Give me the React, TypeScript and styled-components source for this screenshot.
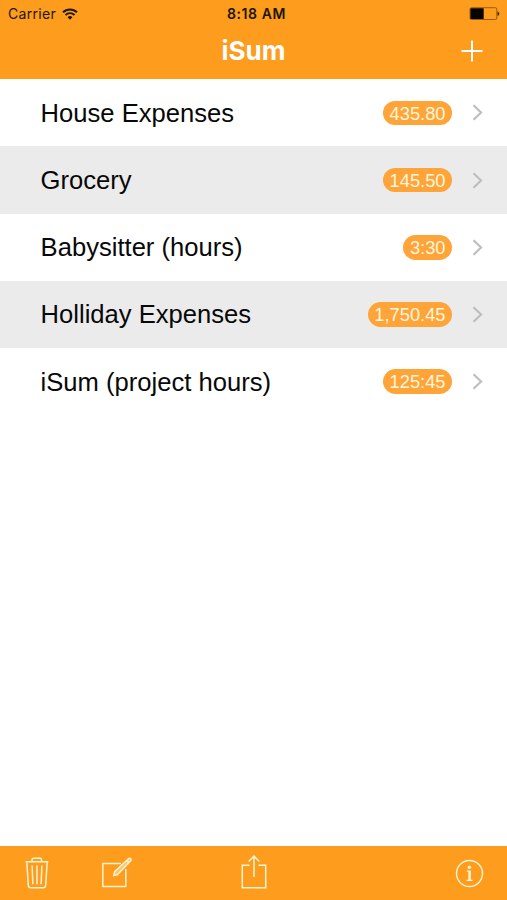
import React from "react";
import styled, { createGlobalStyle } from "styled-components";

const ORANGE = "#fd9c1d";

const GlobalStyle = createGlobalStyle`
  * { box-sizing: border-box; }
  body { margin: 0; background: #fff; }
`;

const Screen = styled.div`
  width: 507px;
  height: 900px;
  display: flex;
  flex-direction: column;
  overflow: hidden;
  background: #fff;
  font-family: "Liberation Sans", Arial, sans-serif;
`;

const Header = styled.header`
  height: 79.3px;
  flex: none;
  background: ${ORANGE};
  font-family: Inter, "Liberation Sans", sans-serif;
`;

const StatusBar = styled.div`
  height: 27px;
  padding: 0 7px 0 8px;
  display: grid;
  grid-template-columns: 1fr auto 1fr;
  align-items: center;
  color: #201606;
`;

const Carrier = styled.div`
  display: flex;
  align-items: center;
  gap: 6px;
  font-size: 14px;
  letter-spacing: 0.3px;
`;

const Clock = styled.time`
  padding-left: 5px;
  font-size: 14px;
  font-weight: 600;
  letter-spacing: 0.6px;
`;

const Battery = styled.svg`
  justify-self: end;
`;

const NavBar = styled.div`
  height: 48px;
  padding: 0 24px;
  display: grid;
  grid-template-columns: 1fr auto 1fr;
  align-items: center;
`;

const Title = styled.h1`
  grid-column: 2;
  margin: 0;
  color: #fff;
  font-size: 26px;
  line-height: 48px;
  font-weight: 700;
`;

const IconButton = styled.button`
  display: flex;
  padding: 0;
  border: 0;
  background: none;
  color: #fff3d0;
`;

const AddButton = styled(IconButton)`
  justify-self: end;
  color: #fff;
`;

const List = styled.ul`
  flex: 1;
  margin: 0;
  padding: 0;
  list-style: none;
`;

const Row = styled.li<{ $shaded: boolean }>`
  height: 67.2px;
  padding: 0 24px 0 40.6px;
  display: flex;
  align-items: center;
  background: ${(p) => (p.$shaded ? "#ebebeb" : "#fff")};
`;

const Name = styled.span`
  flex: 1;
  color: #080808;
  font-size: 25.6px;
  line-height: 30px;
`;

const Total = styled.span`
  height: 24.5px;
  margin-right: 20px;
  padding: 0 6.5px;
  border-radius: 13px;
  background: #ffa438;
  color: #fff6dd;
  font-size: 18.3px;
  line-height: 25px;
`;

const Toolbar = styled.footer`
  height: 54px;
  flex: none;
  padding: 0 23px;
  display: grid;
  grid-template-columns: 1fr auto 1fr;
  align-items: center;
  background: ${ORANGE};
`;

const EditActions = styled.div`
  display: flex;
  align-items: center;
  gap: 50px;
`;

const ShareButton = styled(IconButton)`
  padding-bottom: 3px;
`;

const InfoButton = styled(IconButton)`
  justify-self: end;
`;

const entries = [
  { name: "House Expenses", total: "435.80" },
  { name: "Grocery", total: "145.50" },
  { name: "Babysitter (hours)", total: "3:30" },
  { name: "Holliday Expenses", total: "1,750.45" },
  { name: "iSum (project hours)", total: "125:45" },
];

const WifiIcon = () => (
  <svg width="16" height="12" viewBox="0 0 16 12" fill="none" stroke="currentColor" strokeWidth="1.9">
    <path d="M1 4.3a10 10 0 0 1 14 0" />
    <path d="M3.5 7a6.4 6.4 0 0 1 9 0" />
    <path d="M8 11.7 5.6 9.2a3.5 3.5 0 0 1 4.8 0z" fill="currentColor" stroke="none" />
  </svg>
);

const BatteryIcon = () => (
  <Battery width="31" height="13" viewBox="0 0 31 13">
    <rect x="1" y=".7" width="26.8" height="11.8" rx="1.5" fill="none" stroke="#7b4d12" strokeWidth=".8" />
    <rect x="1.4" y="1.2" width="13.3" height="10.8" rx=".6" fill="#080500" />
    <path d="M28.6 4.4c2.2.8 2.2 3.6 0 4.4z" fill="#201606" />
  </Battery>
);

const PlusIcon = () => (
  <svg width="22" height="22" viewBox="0 0 22 22" stroke="currentColor" strokeWidth="2">
    <path d="M11 .5v21M.5 11h21" />
  </svg>
);

const Chevron = () => (
  <svg width="11" height="17" viewBox="0 0 11 17" fill="none" stroke="#bdbdc0" strokeWidth="2.1">
    <path d="m1.5 1.2 7.6 7.3-7.6 7.3" />
  </svg>
);

const TrashIcon = () => (
  <svg width="28" height="34" viewBox="0 0 28 34" fill="none" stroke="currentColor" strokeWidth="1.5" strokeLinejoin="round">
    <path d="M2.5 5.7h22.8M9 5.5V4q0-1.7 1.7-1.7h6.2q1.7 0 1.7 1.7v1.5" />
    <path d="m3.8 6 1.5 23.3q.2 2.5 2.5 2.5h12.4q2.3 0 2.5-2.5L24.2 6" />
    <path d="m9.1 9.5.8 18.7M14 9.5v18.7M18.9 9.5l-.8 18.7" />
  </svg>
);

const ComposeIcon = () => (
  <svg width="32" height="34" viewBox="0 0 32 34" fill="none" stroke="currentColor" strokeWidth="1.5" strokeLinejoin="round">
    <path d="M20 7.5H1.8v23h23V13" />
    <path d="m12.7 19.6 1-4L27.8 2.5q1.7-.8 2.3.9.2.8-.5 1.5L16.3 18.8z" fill="currentColor" fillOpacity=".45" />
    <path d="m25.8 4.4 2.2 2.2" />
  </svg>
);

const ShareIcon = () => (
  <svg width="26" height="36" viewBox="0 0 26 36" fill="none" stroke="currentColor" strokeWidth="1.5">
    <path d="M8.5 11.2H1.3v22.5h23.4V11.2h-7.2M13 23V2.3M7.7 7.5 13 2.1l5.3 5.4" />
  </svg>
);

const InfoIcon = () => (
  <svg width="29" height="29" viewBox="0 0 29 29" fill="none" stroke="currentColor">
    <circle cx="14.5" cy="14.5" r="13" strokeWidth="1.4" />
    <circle cx="14.4" cy="8.2" r="1.8" fill="currentColor" stroke="none" />
    <path d="M11.8 12.1h3.3v9M11.5 21.3h6.2" strokeWidth="1.2" />
    <path d="M14.5 12v9" strokeWidth="2.4" />
  </svg>
);

export default function App() {
  return (
    <Screen>
      <GlobalStyle />
      <Header>
        <StatusBar>
          <Carrier>
            Carrier
            <WifiIcon />
          </Carrier>
          <Clock>8:18 AM</Clock>
          <BatteryIcon />
        </StatusBar>
        <NavBar>
          <Title>iSum</Title>
          <AddButton aria-label="Add">
            <PlusIcon />
          </AddButton>
        </NavBar>
      </Header>
      <List>
        {entries.map((entry, index) => (
          <Row key={entry.name} $shaded={index % 2 === 1}>
            <Name>{entry.name}</Name>
            <Total>{entry.total}</Total>
            <Chevron />
          </Row>
        ))}
      </List>
      <Toolbar>
        <EditActions>
          <IconButton aria-label="Delete">
            <TrashIcon />
          </IconButton>
          <IconButton aria-label="Edit">
            <ComposeIcon />
          </IconButton>
        </EditActions>
        <ShareButton aria-label="Share">
          <ShareIcon />
        </ShareButton>
        <InfoButton aria-label="Information">
          <InfoIcon />
        </InfoButton>
      </Toolbar>
    </Screen>
  );
}
